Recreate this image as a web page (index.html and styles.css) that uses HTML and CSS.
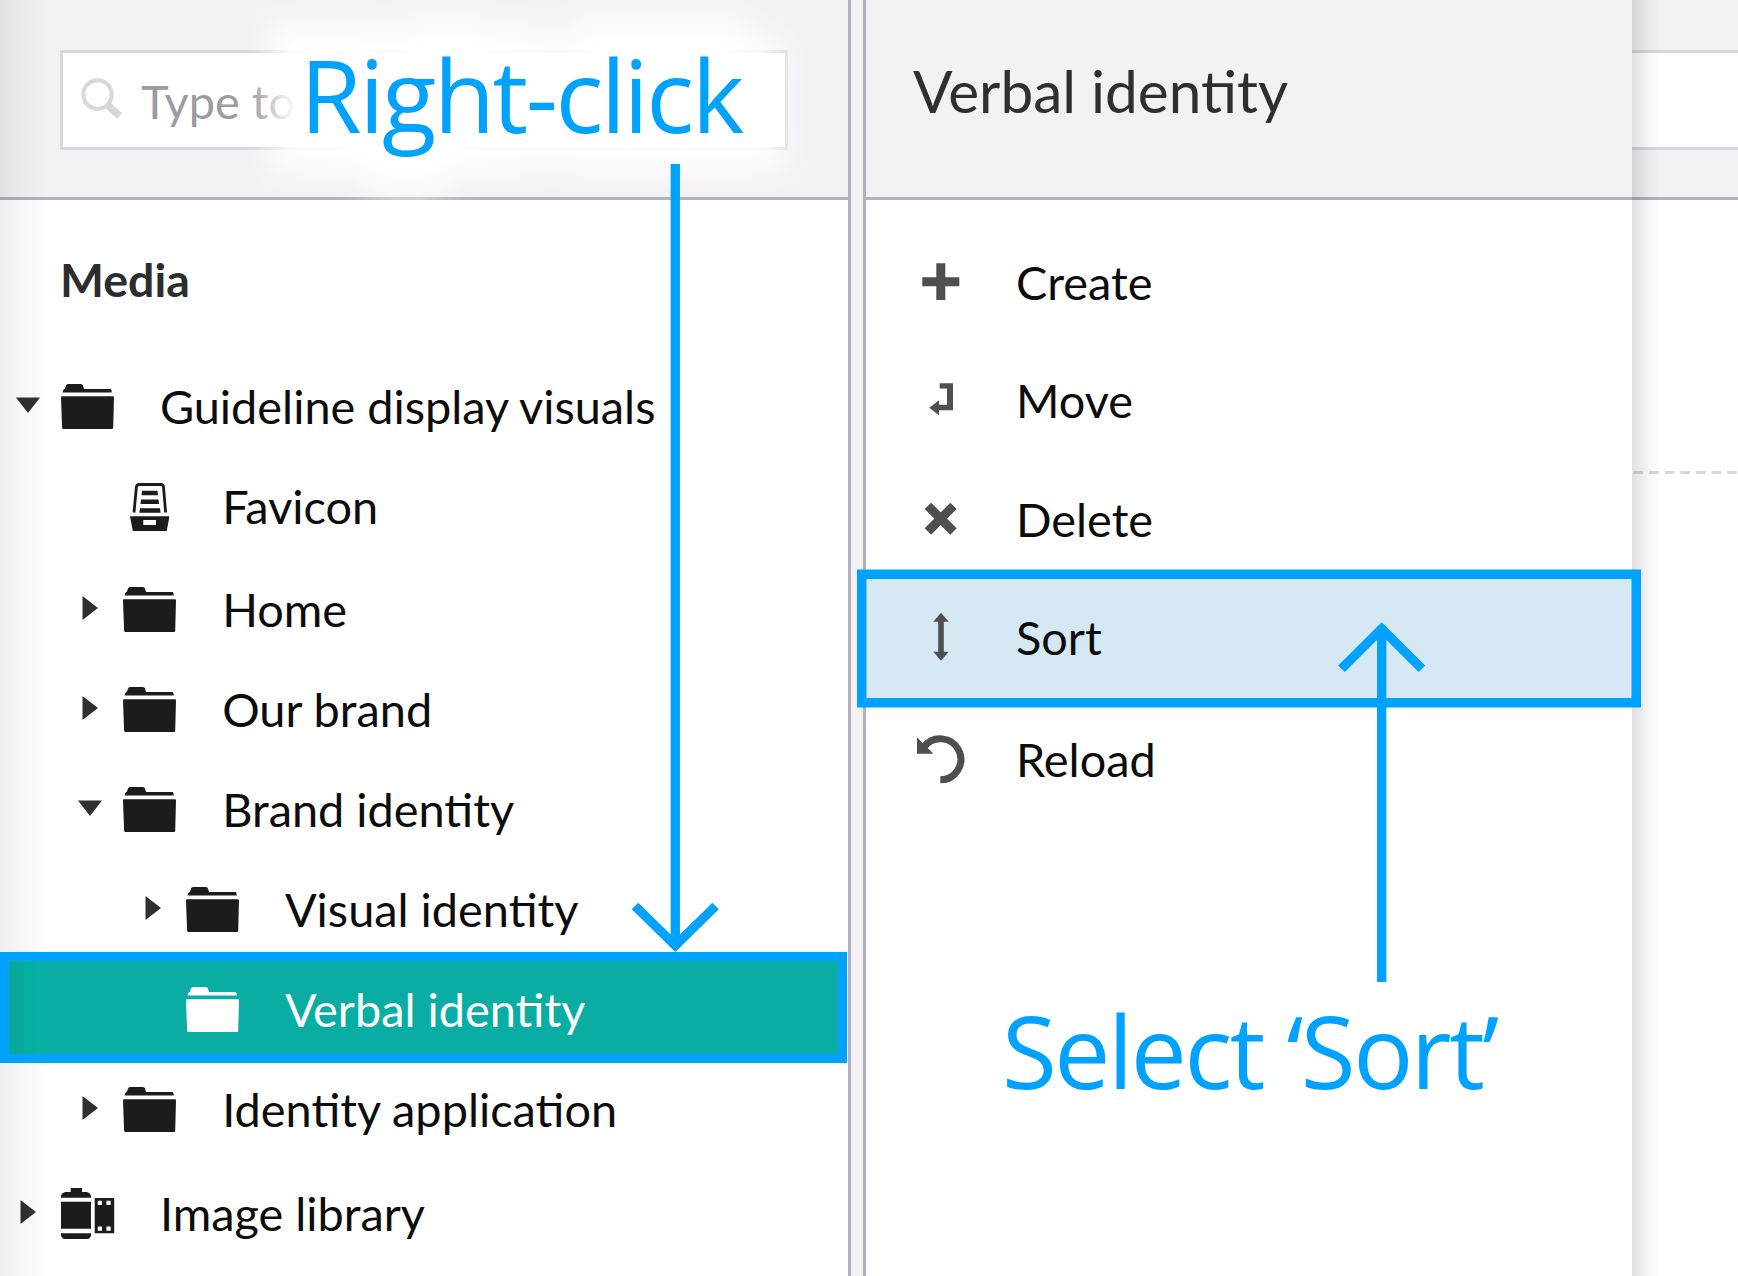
FILE: index.html
```html
<!DOCTYPE html>
<html lang="en">
<head>
<meta charset="utf-8">
<title>Media</title>
<link rel="stylesheet" href="styles.css">
</head>
<body>
<svg class="defs" aria-hidden="true">
  <symbol id="folder" viewBox="0 0 53 45">
    <path d="M1.5 8.5 Q1.7 5.500 4 4.500 L5 1.500 Q5.500 0 7 0 H20 Q21.500 0 22 1.500 L23 5 H49.500 Q50.700 5 50.700 8.500Z"/>
    <path d="M1 12.300 H52 Q53 12.300 53 13.500 L52.200 43.500 Q52 45 51 45 H2.500 Q1.200 45 1.100 43.500 L0 13.500 Q0 12.300 1 12.300Z"/>
  </symbol>
  <symbol id="drawer" viewBox="0 0 39.500 48">
    <path d="M4 29.500 L6.400 4 Q6.700 1.500 9 1.500 H31 Q33.200 1.500 33.500 4 L35.600 29.500" fill="none" stroke="currentColor" stroke-width="2.800"/>
    <path d="M12 7.700H27.500L28 12.300H11.500Z M11 16.500H28.500L29 21H10.500Z M10 25.200H30L30.600 29.700H9.300Z"/>
    <path fill-rule="evenodd" d="M0 33.300H39.500L36.700 48H2.800Z M13.300 37V42H26V37Z"/>
  </symbol>
  <symbol id="film" viewBox="0 0 53.500 51">
    <path d="M0 9.700V8Q.5 5 4 4H9.700V0H21V4H26Q29.500 5 30 8V9.700Z M0 13.700H30V40.700H0Z M0 45.300H30V47.500Q29 51 26 51H4Q1 51 0 47.500Z"/>
    <path fill-rule="evenodd" d="M33.700 10H53.400V45.300H33.700Z M36.800 12.800V17H41V12.800Z M45.400 12.800V17H49.700V12.800Z M36.800 38.400V42.700H41V38.400Z M45.400 38.400V42.700H49.700V38.400Z"/>
  </symbol>
  <symbol id="caret-down" viewBox="0 0 24 24"><path d="M0 4.500H24L12 20Z"/></symbol>
  <symbol id="caret-right" viewBox="0 0 24 24"><path d="M4.500 0L20 12L4.500 24Z"/></symbol>
</svg>

<main class="app">
  <aside class="tree-panel">
    <header class="bar search-bar">
      <div class="search">
        <svg class="search-icon" viewBox="0 0 42 42"><circle cx="16.500" cy="16.500" r="14.200" fill="none" stroke="currentColor" stroke-width="4"/><path d="M26 26.500L38.500 38" stroke="currentColor" stroke-width="7.500"/></svg>
        <span>Type to</span>
      </div>
    </header>
    <h2 class="section">Media</h2>
    <ul class="tree">
      <li class="node"><svg class="caret"><use href="#caret-down"/></svg><span class="icon"><svg class="folder"><use href="#folder"/></svg></span><span class="label">Guideline display visuals</span></li>
      <li class="node l1 file"><span class="caret"></span><span class="icon"><svg class="drawer"><use href="#drawer"/></svg></span><span class="label">Favicon</span></li>
      <li class="node l1"><svg class="caret"><use href="#caret-right"/></svg><span class="icon"><svg class="folder"><use href="#folder"/></svg></span><span class="label">Home</span></li>
      <li class="node l1"><svg class="caret"><use href="#caret-right"/></svg><span class="icon"><svg class="folder"><use href="#folder"/></svg></span><span class="label">Our brand</span></li>
      <li class="node l1"><svg class="caret"><use href="#caret-down"/></svg><span class="icon"><svg class="folder"><use href="#folder"/></svg></span><span class="label">Brand identity</span></li>
      <li class="node l2"><svg class="caret"><use href="#caret-right"/></svg><span class="icon"><svg class="folder"><use href="#folder"/></svg></span><span class="label">Visual identity</span></li>
      <li class="node l2 selected"><span class="caret"></span><span class="icon"><svg class="folder"><use href="#folder"/></svg></span><span class="label">Verbal identity</span></li>
      <li class="node l1"><svg class="caret"><use href="#caret-right"/></svg><span class="icon"><svg class="folder"><use href="#folder"/></svg></span><span class="label">Identity application</span></li>
      <li class="node library"><svg class="caret"><use href="#caret-right"/></svg><span class="icon"><svg class="film"><use href="#film"/></svg></span><span class="label">Image library</span></li>
    </ul>
    <div class="edge-shade"></div>
  </aside>

  <div class="gutter"></div>

  <section class="menu-panel">
    <header class="bar title-bar"><h1>Verbal identity</h1></header>
    <ul class="menu">
      <li><svg viewBox="0 0 50 50"><path d="M20.300 5.300H29.300V19.200H43.300V28.200H29.300V42H20.300V28.200H6.300V19.200H20.300Z"/></svg><span class="label">Create</span></li>
      <li><svg viewBox="0 0 50 50"><path d="M23.700 7.200H37V34.200H23V39.200L13.300 31.800L23 24.200V28.800H31V12.500H23.700Z"/></svg><span class="label">Move</span></li>
      <li><svg viewBox="0 0 50 50"><path d="M11.900 10.900L37.500 36.500M37.500 10.900L11.900 36.500" stroke="currentColor" stroke-width="9"/></svg><span class="label">Delete</span></li>
      <li class="active"><svg viewBox="0 0 50 50"><path d="M25 -.2L32.700 8.800H27.800V38.800H32.700L25 47.800L17.300 38.800H22.200V8.800H17.300Z"/></svg><span class="label">Sort</span></li>
      <li class="reload"><svg viewBox="0 0 50 50"><path d="M24.300 44.800A20.500 20.500 0 1 0 7.800 12.200" fill="none" stroke="currentColor" stroke-width="7"/><path d="M1 2.300L17.300 18.700H1Z"/></svg><span class="label">Reload</span></li>
    </ul>
  </section>

  <section class="content-panel">
    <header class="bar"><div class="field"></div></header>
    <svg class="dashes" viewBox="0 0 106 3"><path d="M1.500 1.500H106" stroke="#d8d7da" stroke-width="3" stroke-dasharray="9.700 5.900"/></svg>
  </section>
</main>

<div class="note note-click" data-text="Right-click">Right-click</div>
<div class="note note-sort">Select ‘Sort’</div>
<svg class="arrows" viewBox="0 0 1738 1276">
  <path d="M675.300 164V948M635 906L675.300 945.500L715.600 906"/>
  <path d="M1381.700 982V626M1341.500 668.800L1381.700 628.700L1421.900 668.800"/>
</svg>
</body>
</html>
```
FILE: styles.css
```css
* { box-sizing: border-box; }

body {
  margin: 0;
  width: 1738px;
  height: 1276px;
  overflow: hidden;
  position: relative;
  background: #fff;
  color: #0c0c0c;
  font-family: Lato, Carlito, sans-serif;
  font-size: 46.875px;
  line-height: 56px;
}

ul { list-style: none; margin: 0; padding: 0; }
svg { display: block; fill: currentColor; overflow: visible; }
.defs { position: absolute; width: 0; height: 0; }

.app { display: flex; height: 1276px; }

.bar {
  height: 200px;
  background: #f3f1f5;
  border-bottom: 3px solid #b3b0be;
}

.label { margin-top: -2px; }

/* Tree */
.tree-panel { position: relative; width: 848px; }

.search-bar { padding: 50px 60px 0; }

.search {
  display: flex;
  align-items: center;
  gap: 18px;
  height: 100px;
  padding: 1px 0 0 18px;
  background: #fff;
  border: 3px solid #d8d8da;
  color: #9c9ba1;
}

.search-icon { width: 42px; height: 42px; color: #d8d8da; margin-top: -4px; }

.section {
  margin: 51px 0 50px 60px;
  font-size: 46.500px;
  line-height: 56px;
  font-weight: 700;
  color: #2d2c2f;
}

.node {
  display: flex;
  align-items: center;
  height: 100px;
  padding-left: 16px;
  white-space: nowrap;
}
.l1 { padding-left: 78.300px; }
.l2 { padding-left: 141px; }
.file { margin-bottom: 3px; }
.library { margin-top: 4px; }

.caret { width: 24px; height: 24px; margin: -5px 21px 0 0; color: #303033; }
.icon {
  display: flex;
  justify-content: center;
  width: 53px;
  margin: -2px 45.900px 0 0;
  color: #1d1c1a;
}
.folder { width: 53px; height: 45px; flex: none; }
.drawer { width: 39.500px; height: 48px; flex: none; margin-top: 1px; }
.film { width: 53.500px; height: 51px; flex: none; margin-top: 1px; }

.selected {
  position: relative;
  z-index: 1;
  height: 111px;
  margin: -8px 1px -3px 0;
  padding: 5px 0 0 132px;
  border: 9.500px solid #00a2ff;
  background: linear-gradient(90deg, #0ba89b, #06aea3 30px, #0aada4 40px);
  color: #fff;
}
.selected .icon { color: #fff; }

.edge-shade {
  position: absolute;
  inset: 0 auto 0 0;
  width: 46px;
  background: linear-gradient(90deg, rgba(0, 0, 0, .065), rgba(0, 0, 0, .035) 40%, rgba(0, 40, 20, .025) 75%, transparent);
}

/* Divider */
.gutter {
  width: 18px;
  background: #f3f1f5;
  border: solid #b3b0be;
  border-width: 0 3px;
}

/* Context menu */
.menu-panel {
  position: relative;
  z-index: 1;
  width: 766px;
  background: #fff;
}
.title-bar { padding: 54px 0 0 47px; }
.title-bar h1 { margin: 0; font-size: 58.500px; line-height: 72px; font-weight: 400; color: #2f2e31; }

.menu { padding-top: 23.500px; }
.menu li {
  display: flex;
  align-items: center;
  gap: 50px;
  height: 118.500px;
  padding-left: 50px;
}
.menu svg { width: 50px; height: 50px; color: #4f4e50; }
.menu .active {
  margin: 0 -9px 0 -9.500px;
  padding-left: 59.500px;
  background: #d6e8f4;
  box-shadow: inset 9.500px 0 #00a2ff, inset -9.500px 0 #00a2ff, 0 -9.500px #00a2ff, 0 9.500px #00a2ff;
}
.menu .reload { margin-top: 3px; }

/* Page behind the menu, shaded along the menu's edge */
.content-panel { position: relative; flex: 1; }
.content-panel::after {
  content: "";
  position: absolute;
  inset: 0 auto 0 0;
  width: 28px;
  background: linear-gradient(90deg, rgba(0, 0, 0, .12), rgba(0, 0, 0, .09) 25%, rgba(0, 0, 0, .035) 60%, transparent);
}
.content-panel .bar { padding-top: 50px; }
.field { height: 100px; background: #fff; border: solid #d8d8da; border-width: 3px 0; }
.dashes { width: 106px; height: 3px; margin-top: 271px; }

/* Callouts */
.note {
  position: absolute;
  z-index: 2;
  font-family: "Open Sans", "Noto Sans", sans-serif;
  font-size: 100px;
  line-height: 136px;
  letter-spacing: -2.500px;
  color: #00a2ff;
  white-space: nowrap;
}
.note-click { left: 300px; top: 25.500px; }
.note-click::before {
  content: attr(data-text);
  position: absolute;
  inset: 0;
  z-index: -1;
  color: #fff;
  -webkit-text-stroke: 76px #fff;
  stroke-linejoin: round;
  filter: blur(16px);
}
.note-sort { left: 1002px; top: 982px; }
.arrows {
  position: absolute;
  inset: 0;
  z-index: 3;
  width: 1738px;
  height: 1276px;
  fill: none;
  stroke: #00a2ff;
  stroke-width: 9.300;
}
```
